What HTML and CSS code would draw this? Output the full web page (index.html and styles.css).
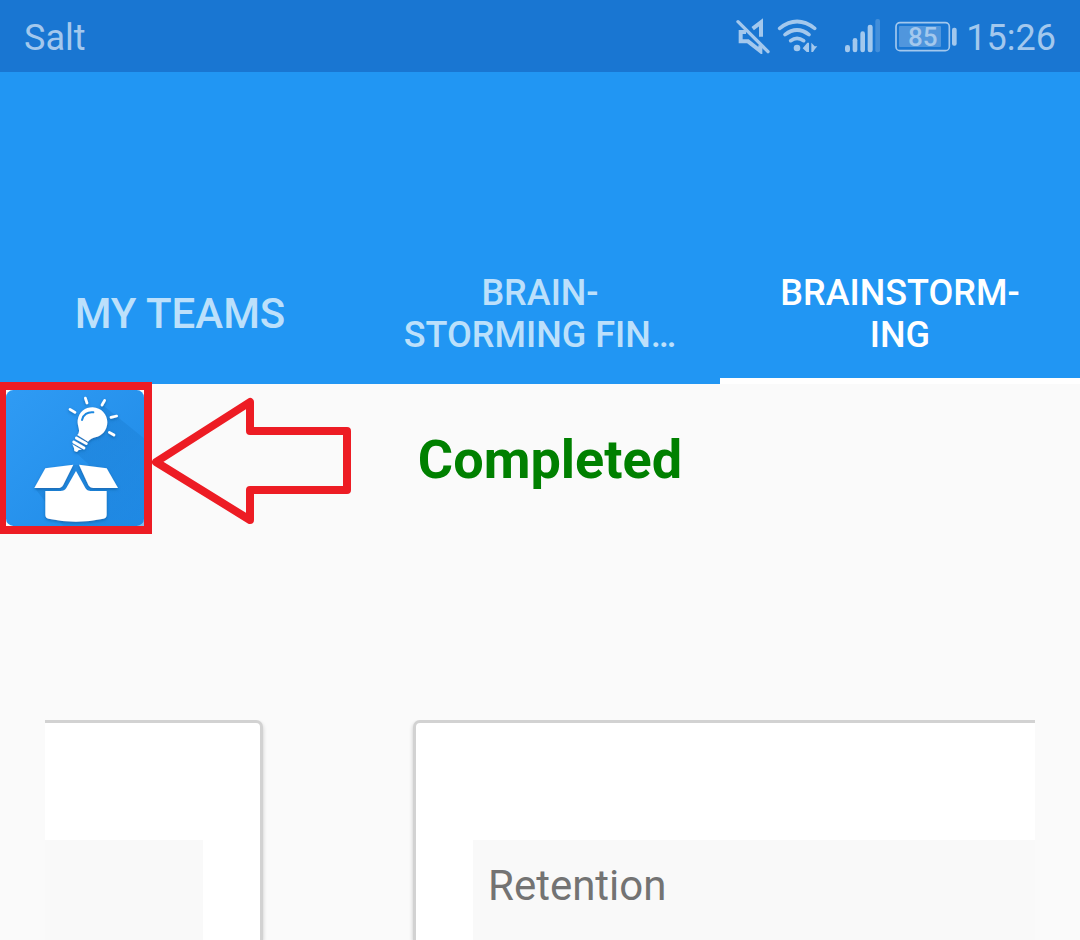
FILE: index.html
```html
<!DOCTYPE html>
<html lang="en">
<head>
<meta charset="utf-8">
<meta name="viewport" content="width=device-width, initial-scale=1">
<title>Brainstorming</title>
<link rel="stylesheet" href="styles.css">
</head>
<body>
<div class="status-bar">
  <span class="carrier">Salt</span>
  <div class="indicators">
    <svg class="mute" viewBox="45 54 108 108" aria-hidden="true">
      <path d="M78 96H62V124H84L121 153V136M98 86L123 67V110" fill="none" stroke="currentColor" stroke-width="12"/>
      <path d="M54 65L144 155" stroke="currentColor" stroke-width="10" stroke-linecap="round"/>
    </svg>
    <svg class="wifi" viewBox="168 54 129 108" aria-hidden="true">
      <g fill="none" stroke="currentColor" stroke-width="11" stroke-linecap="round">
        <path d="M179 85Q231 44 284 85"/>
        <path d="M195 104Q231 76 267 104"/>
        <path d="M212 122Q231 108 251 122"/>
      </g>
      <circle cx="231" cy="144" r="10" fill="currentColor"/>
      <path d="M248 145L262 128H267V156H260ZM274 128V156H279L285 147L292 139H284Z" fill="currentColor"/>
    </svg>
    <svg class="signal" viewBox="372 54 111 108" aria-hidden="true">
      <g fill="currentColor">
        <rect x="375" y="135" width="15" height="22" rx="7"/>
        <rect x="398" y="114" width="14" height="43" rx="7"/>
        <rect x="421" y="94" width="14" height="63" rx="7"/>
        <rect x="443" y="74" width="15" height="83" rx="7"/>
        <rect x="466" y="57" width="14" height="100" rx="6" opacity=".3"/>
      </g>
    </svg>
    <div class="battery">
      <svg viewBox="45 54 189 108" aria-hidden="true">
        <rect x="48" y="68" width="160" height="84" rx="12" fill="none" stroke="currentColor" stroke-width="5"/>
        <rect x="57" y="78" width="126" height="63" rx="3" fill="currentColor" opacity=".4"/>
        <rect x="216" y="83" width="14" height="54" rx="6" fill="currentColor"/>
      </svg>
      <span class="level">85</span>
    </div>
    <time class="clock">15:26</time>
  </div>
</div>

<header class="app-bar">
  <nav class="tabs">
    <button class="tab tab-large" type="button">MY TEAMS</button>
    <button class="tab" type="button">BRAIN-<br>STORMING FIN…</button>
    <button class="tab active" type="button">BRAINSTORM-<br>ING</button>
  </nav>
</header>

<main class="workspace">
  <div class="summary">
    <button class="idea-button" type="button" aria-label="Idea box">
      <svg viewBox="18 45 414 408" aria-hidden="true">
        <defs>
          <linearGradient id="tile" x1="0" y1="0" x2="1" y2="1">
            <stop offset="0" stop-color="#2f9bf4"/>
            <stop offset="1" stop-color="#1f8ae6"/>
          </linearGradient>
          <linearGradient id="cast" x1="0" y1="0" x2="1" y2="1">
            <stop offset="0" stop-color="#1b7ccf"/>
            <stop offset="1" stop-color="#1f88e2"/>
          </linearGradient>
          <filter id="soft" x="-20%" y="-20%" width="140%" height="140%">
            <feDropShadow dx="0" dy="4" stdDeviation="4" flood-color="#0c4f8c" flood-opacity=".6"/>
          </filter>
        </defs>
        <rect x="18" y="45" width="414" height="408" rx="22" fill="url(#tile)"/>
        <path d="M308 90L432 190V453H190L105 340L220 270L268 270L222 228Z" fill="url(#cast)" opacity=".55"/>
        <g filter="url(#soft)" fill="#fff">
          <path d="M232 180C244 168 231 154 233 136C237 110 256 97 278 97C304 98 322 119 322 142C322 168 303 184 286 187C276 189 269 194 264 200Z"/>
          <path d="M246 135C249 119 263 110 280 112" fill="none" stroke="#1f88e0" stroke-width="6" stroke-linecap="round"/>
          <path d="M229 189L259 206M221 201L252 219" stroke="#fff" stroke-width="8" stroke-linecap="round"/>
          <path d="M217 208L245 224L236 225L231 231L223 228L222 219Z"/>
          <path d="M256 69L261 84M314 76L306 90M210 103L225 112M333 127L350 123M328 172L342 180" stroke="#fff" stroke-width="8" stroke-linecap="round"/>
          <path d="M136 280L220 269L190 329Q185 339 173 339H103Z"/>
          <path d="M237 269L320 280L354 339H281Q270 339 265 330Z"/>
          <path d="M228 288L256 339Q261 348 272 348H320V419Q320 429 310 431Q228 449 146 431Q136 429 136 419V348H182Q194 348 199 339Z"/>
        </g>
      </svg>
    </button>
    <h1 class="state">Completed</h1>
    <svg class="callout" viewBox="0 382 360 152" aria-hidden="true">
      <path d="M2 386H148V530H2Z"/>
      <path d="M156 462L250 402V431H347V490H250V520Z" stroke-linejoin="round"/>
    </svg>
  </div>

  <div class="board">
    <section class="card card-previous">
      <div class="field"></div>
    </section>
    <section class="card card-current">
      <div class="field">Retention</div>
    </section>
  </div>
</main>
</body>
</html>
```
FILE: styles.css
```css
* {
  box-sizing: border-box;
}

body {
  margin: 0;
  height: 100vh;
  display: flex;
  flex-direction: column;
  overflow: hidden;
  background: #fafafa;
  font-family: Roboto, "Liberation Sans", sans-serif;
}

button {
  border: 0;
  background: none;
  font: inherit;
  cursor: pointer;
}

svg {
  display: block;
}

.status-bar {
  display: flex;
  justify-content: space-between;
  align-items: center;
  height: 72px;
  padding: 4px 24px 0;
  flex: none;
  background: #1976d2;
  color: #a3c8ed;
  font-size: 36px;
}

.indicators {
  display: flex;
  align-items: center;
}

.indicators svg {
  height: 36px;
  margin-bottom: 4px;
}

.mute {
  width: 36px;
  margin-right: 5px;
}

.wifi {
  width: 43px;
  margin-right: 25px;
}

.signal {
  width: 37px;
  margin-right: 14px;
}

.battery {
  display: grid;
  justify-items: center;
  align-items: center;
  margin-right: 8px;
}

.battery svg,
.level {
  grid-area: 1 / 1;
}

.battery svg {
  width: 63px;
}

.level {
  padding: 0 8px 2px 0;
  font-size: 26px;
  font-weight: 500;
}

.app-bar {
  display: flex;
  flex-direction: column;
  justify-content: flex-end;
  flex: none;
  height: 312px;
  background: #2196f3;
}

.tabs {
  display: grid;
  grid-template-columns: repeat(3, 1fr);
  height: 144px;
}

.tab {
  padding: 10px 0 6px;
  border-bottom: 0 solid #fff;
  color: #bce0fb;
  font-size: 36px;
  font-weight: 500;
  line-height: 42px;
}

.tab-large {
  font-size: 42px;
}

.active {
  padding-bottom: 0;
  border-bottom-width: 6px;
  color: #fff;
}

.workspace {
  display: flex;
  flex-direction: column;
  flex: 1;
}

.summary {
  position: relative;
  display: grid;
  grid-template-columns: 150px 1fr 130px;
  align-items: center;
  height: 150px;
  margin-bottom: 186px;
}

.idea-button {
  padding: 0 6px 2px;
}

.idea-button svg {
  width: 138px;
  height: 136px;
}

.state {
  margin: 0;
  text-align: center;
  color: #008000;
  font-size: 54px;
  font-weight: 700;
}

.callout {
  position: absolute;
  top: -2px;
  left: 0;
  width: 360px;
  height: 152px;
  fill: none;
  stroke: #ed1c24;
  stroke-width: 8;
  pointer-events: none;
}

.board {
  display: flex;
  flex: 1;
  gap: 150px;
  margin: 0 45px;
  overflow: hidden;
}

.card {
  padding-top: 117px;
  border: 0 solid #d2d2d2;
  border-top-width: 3px;
  background: #fff;
  box-shadow: 0 2px 4px #00000033;
}

.card-previous {
  width: 218px;
  padding-right: 57px;
  border-right-width: 3px;
  border-top-right-radius: 7px;
}

.card-current {
  flex: 1;
  padding-left: 57px;
  border-left-width: 3px;
  border-top-left-radius: 7px;
}

.field {
  height: 100%;
  padding: 21px 15px;
  background: #f9f9f9;
  color: #737373;
  font-size: 42px;
  line-height: 50px;
}
```
